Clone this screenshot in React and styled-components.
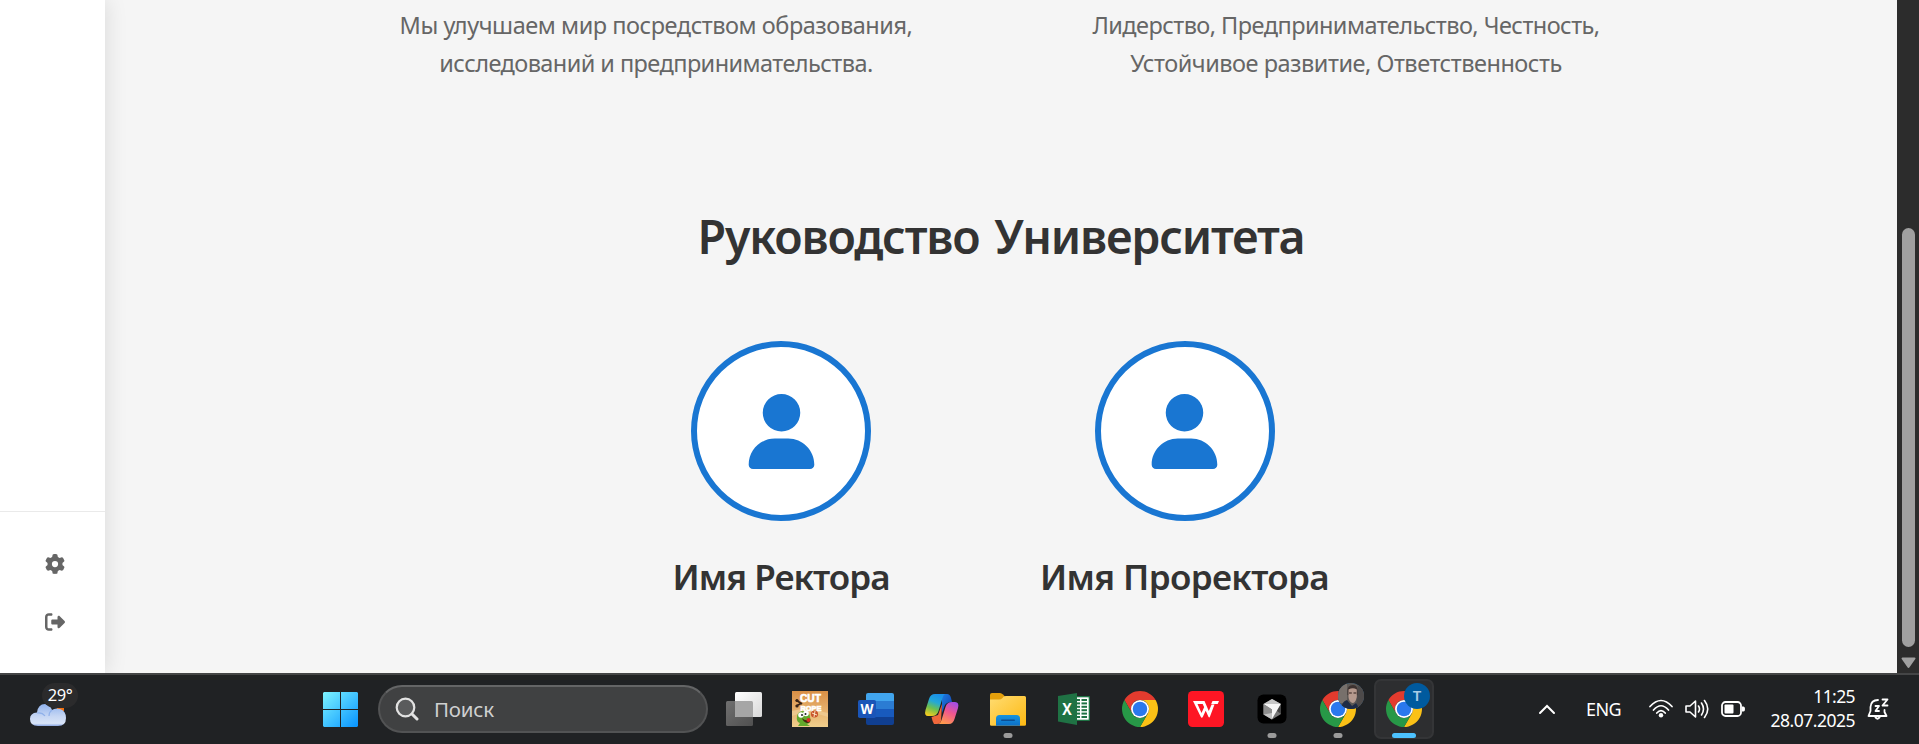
import React from "react";
import styled, { createGlobalStyle } from "styled-components";
import { FaUser, FaGear, FaRightFromBracket } from "react-icons/fa6";

const Global = createGlobalStyle`
  * { box-sizing: border-box; }
  html, body { margin: 0; padding: 0; }
  body { background: #202224; overflow: hidden; font-family: "Noto Sans", "Open Sans", sans-serif; }
  svg { display: block; flex: none; }
`;

const Screen = styled.div`
  width: 1919px;
  height: 744px;
  display: flex;
  flex-direction: column;
  overflow: hidden;
`;

const Viewport = styled.div`
  height: 673px;
  display: flex;
  background: #f5f5f5;
`;

const Sidebar = styled.aside`
  width: 105px;
  display: flex;
  flex-direction: column;
  justify-content: flex-end;
  background: #fff;
  box-shadow: 2px 0 20px rgba(0, 0, 0, 0.1);
`;

const SidebarFooter = styled.div`
  height: 162px;
  padding: 31.5px 0 0 5px;
  border-top: 1px solid #eaeaea;
  display: flex;
  flex-direction: column;
  align-items: center;
  gap: 18.5px;
`;

const SidebarButton = styled.div`
  width: 40px;
  height: 40px;
  display: flex;
  align-items: center;
  justify-content: center;
  color: #666;
  font-size: 20px;
`;

const Content = styled.main`
  flex: 1;
  display: flex;
  flex-direction: column;
  align-items: center;
`;

const Values = styled.div`
  display: grid;
  grid-template-columns: 640px 640px;
  column-gap: 50px;
  padding-top: 6px;
`;

const ValueText = styled.div`
  display: flex;
  flex-direction: column;
  align-items: center;
  color: #666;
  font-size: 23.5px;
  line-height: 38px;
`;

const Line = styled.span`
  white-space: nowrap;
  letter-spacing: ${(p) => p.$ls || 0}px;
`;

const Heading = styled.h2`
  margin: 122px 0 0;
  height: 64px;
  line-height: 64px;
  font-size: 46.5px;
  font-weight: 600;
  word-spacing: 4px;
  color: #333;
`;

const Team = styled.div`
  display: flex;
  gap: 151px;
  margin-top: 73px;
`;

const Member = styled.div`
  width: ${(p) => p.$w}px;
  display: flex;
  flex-direction: column;
  align-items: center;
`;

const Avatar = styled.div`
  width: 180px;
  height: 180px;
  border-radius: 50%;
  border: 6px solid #1976d2;
  background: #fff;
  color: #1976d2;
  font-size: 75px;
  display: flex;
  align-items: center;
  justify-content: center;
`;

const MemberName = styled.h3`
  margin: 31px 0 0;
  line-height: 50px;
  font-size: 35px;
  font-weight: 600;
  color: #333;
`;

const Scrollbar = styled.div`
  width: 22px;
  background: #2c2c2c;
  display: flex;
  flex-direction: column;
  align-items: center;
  padding: 228px 0 0 1px;
`;

const Thumb = styled.div`
  width: 13px;
  height: 419px;
  border-radius: 7px;
  background: #a0a0a0;
  margin-bottom: 10px;
`;

const Taskbar = styled.footer`
  height: 71px;
  border-top: 2px solid #444546;
  background: #202224;
  display: flex;
  align-items: center;
  color: #fff;
`;

const Weather = styled.div`
  width: 293px;
  height: 69px;
  padding: 8px 0 0 29px;
`;

const WeatherArt = styled.div`
  position: relative;
  width: 50px;
  height: 44px;
  display: flex;
  align-items: flex-end;
`;

const Degrees = styled.div`
  position: absolute;
  left: 13px;
  top: 0;
  width: 36px;
  height: 25px;
  border-radius: 13px;
  background: #2b2b2c;
  font-size: 16.5px;
  line-height: 24px;
  text-align: center;
  letter-spacing: -0.5px;
`;

const StartButton = styled.div`
  width: 85px;
  display: flex;
  justify-content: center;
  padding-left: 10px;
`;

const Search = styled.div`
  width: 330px;
  height: 48px;
  margin-top: -1px;
  border-radius: 24px;
  border: 2px solid #525354;
  border-top-color: #646566;
  background: #404142;
  display: flex;
  align-items: center;
  padding-left: 15px;
  gap: 15px;
  color: #cfd0d0;
  font-size: 20.5px;
`;

const Apps = styled.div`
  display: flex;
  padding-left: 3px;
`;

const AppSlot = styled.div`
  width: 66px;
  height: 69px;
  padding: 4px 3px 5px;
`;

const AppButton = styled.div`
  position: relative;
  height: 60px;
  border-radius: 7px;
  display: flex;
  align-items: center;
  justify-content: center;
  background: ${(p) => (p.$active ? "#2d2e30" : "transparent")};
  border: 2px solid ${(p) => (p.$active ? "#343537" : "transparent")};
`;

const Indicator = styled.div`
  position: absolute;
  bottom: -1px;
  left: 50%;
  transform: translateX(-50%);
  width: ${(p) => (p.$active ? 24 : 9)}px;
  height: 5px;
  border-radius: 3px;
  background: ${(p) => (p.$active ? "#4cc2ff" : "#9b9b9b")};
`;

const Badge = styled.div`
  position: absolute;
  right: 2px;
  top: 2px;
  width: 26px;
  height: 26px;
  border-radius: 50%;
  overflow: hidden;
  background: #005a9e;
  color: #a9cbe6;
  font-size: 15px;
  font-weight: 600;
  line-height: 25px;
  text-align: center;
`;

const Tray = styled.div`
  flex: 1;
  display: flex;
  align-items: center;
  padding-left: 101px;
  margin-top: -2px;
`;

const Language = styled.div`
  width: 63px;
  margin-left: 30px;
  font-size: 18px;
  letter-spacing: -0.6px;
`;

const StatusIcons = styled.div`
  display: flex;
  align-items: center;
  gap: 12px;
`;

const Clock = styled.div`
  width: 110px;
  display: flex;
  flex-direction: column;
  align-items: flex-end;
  font-size: 17.5px;
  line-height: 24px;
  margin: -1px 12px 0 0;
`;

const Chrome = () => (
  <svg width="36" height="36" viewBox="0 0 48 48">
    <path fill="#e33b2e" d="M24 12H44.78A24 24 0 0 0 3.22 12L13.6 30A12 12 0 0 1 24 12Z" />
    <path fill="#fbc116" d="M34.4 30L24 48A24 24 0 0 0 44.78 12H24A12 12 0 0 1 34.4 30Z" />
    <path fill="#279847" d="M13.6 30L3.22 12A24 24 0 0 0 24 48L34.4 30A12 12 0 0 1 13.6 30Z" />
    <circle cx="24" cy="24" r="12" fill="#fff" />
    <circle cx="24" cy="24" r="9.7" fill="#2a78ed" />
  </svg>
);

const TaskView = () => (
  <svg width="36" height="36" viewBox="0 0 36 36">
    <defs>
      <linearGradient id="tv1" x1="0" y1="0" x2="1" y2="1"><stop stopColor="#fff" /><stop offset="1" stopColor="#d8d8d8" /></linearGradient>
      <linearGradient id="tv2" x1="0" y1="0" x2="1" y2="1"><stop stopColor="#707070" /><stop offset="1" stopColor="#505050" /></linearGradient>
    </defs>
    <rect x="0" y="10" width="27" height="25" rx="1.5" fill="url(#tv2)" />
    <rect x="9" y="1" width="27" height="25" rx="1.5" fill="url(#tv1)" />
    <path d="M9 10H25.5Q27 10 27 11.5V26H10.5Q9 26 9 24.5Z" fill="#a6a6a6" />
  </svg>
);

const CutRope = () => (
  <svg width="36" height="36" viewBox="0 0 36 36">
    <defs>
      <linearGradient id="cr" x1="0" y1="0" x2="0" y2="1"><stop stopColor="#d98f45" /><stop offset=".5" stopColor="#e5ae6b" /><stop offset="1" stopColor="#f0cf8d" /></linearGradient>
    </defs>
    <rect width="36" height="36" fill="url(#cr)" />
    <path d="M0 20L14 17 36 22V26L16 20 0 25Z" fill="#f0cf98" opacity=".7" />
    <g fontFamily="Liberation Sans" fontWeight="700" fill="#fff" stroke="#fff" strokeWidth=".6">
      <text x="8" y="10.600" fontSize="10.500" textLength="21" lengthAdjust="spacingAndGlyphs">CUT</text>
      <text x="8.500" y="19.500" fontSize="7.200" textLength="21" lengthAdjust="spacingAndGlyphs">ROPE</text>
    </g>
    <path d="M4 9L10 13M4 15L10 12" stroke="#3a2417" strokeWidth="1.8" />
    <circle cx="5" cy="9.5" r="1.6" fill="#3a2417" /><circle cx="5" cy="15" r="1.6" fill="#3a2417" />
    <circle cx="22.5" cy="23" r="3.6" fill="#c9542b" /><path d="M20 22L25 24M23 20L22 26" stroke="#fff0d0" strokeWidth=".9" />
    <path d="M5 25Q6 20 12 20Q18 21 18 26Q20 32 15 33L18 35H6L8 32Q4 31 5 25Z" fill="#63a82c" />
    <path d="M10 27Q14 31 18 28Q19 32 15 32Q11 31 10 27Z" fill="#46270f" /><circle cx="16.5" cy="29" r="2" fill="#e02a25" />
    <circle cx="9" cy="24" r="2.8" fill="#fff" /><circle cx="14" cy="22.5" r="2.8" fill="#fff" />
    <circle cx="10" cy="24" r="1" fill="#222" /><circle cx="13.5" cy="23" r="1" fill="#222" />
  </svg>
);

const Word = () => (
  <svg width="36" height="36" viewBox="0 0 36 36">
    <path d="M10 2H34a2 2 0 0 1 2 2V10H8V4a2 2 0 0 1 2-2Z" fill="#41a5ee" />
    <rect x="8" y="10" width="28" height="8" fill="#2b7cd3" />
    <rect x="8" y="18" width="28" height="8" fill="#185abd" />
    <path d="M8 26H36V32a2 2 0 0 1-2 2H10a2 2 0 0 1-2-2Z" fill="#103f91" />
    <rect x="0" y="9" width="18" height="18" rx="1.8" fill="#1a55b8" />
    <text x="2.500" y="23" fontFamily="Open Sans" fontWeight="700" fontSize="14" fill="#fff" textLength="13" lengthAdjust="spacingAndGlyphs">W</text>
  </svg>
);

const Excel = () => (
  <svg width="36" height="36" viewBox="0 0 36 36">
    <rect x="17" y="5" width="17" height="25" rx="1" fill="#1f7244" />
    <rect x="18" y="6.3" width="14.7" height="22.4" fill="#fff" />
    <g fill="#1f7244">
      {[8, 11.4, 14.8, 18.2, 21.6, 25].map((y) => (
        <React.Fragment key={y}>
          <rect x="18.5" y={y} width="5.5" height="2" />
          <rect x="25.5" y={y} width="5.5" height="2" />
        </React.Fragment>
      ))}
    </g>
    <path d="M2 5L21 2V34L2 30.5Z" fill="#1f7244" />
    <text x="11" y="23.5" fontFamily="Open Sans" fontWeight="700" fontSize="16" fill="#fff" textAnchor="middle" textLength="9.5" lengthAdjust="spacingAndGlyphs">X</text>
  </svg>
);

const Copilot = () => (
  <svg width="36" height="36" viewBox="0 0 36 36">
    <defs>
      <linearGradient id="cp1" x1="0.6" y1="0" x2="0.25" y2="1"><stop stopColor="#1a8fe8" /><stop offset=".35" stopColor="#23a8d8" /><stop offset=".65" stopColor="#6cc04f" /><stop offset="1" stopColor="#f4cb1f" /></linearGradient>
      <linearGradient id="cp2" x1="0.75" y1="0" x2="0.3" y2="1"><stop stopColor="#a34ee6" /><stop offset=".45" stopColor="#f0568f" /><stop offset="1" stopColor="#ff9a4c" /></linearGradient>
      <linearGradient id="cp3" x1="0" y1="0" x2="1" y2="1"><stop stopColor="#1c7be0" /><stop offset="1" stopColor="#123fae" /></linearGradient>
    </defs>
    <path d="M18 3H23Q26 3 27 7L28 11Q22 11 20.5 15L18 22Z" fill="url(#cp3)" />
    <path d="M10 33Q8.500 31 7.500 26L14 24 18 13 17 30Q16 33 13 33Z" fill="#f0683c" />
    <path d="M11 3H21Q19.500 3.500 18.500 7L14.500 20Q13 25 8 25H4Q0 25 1.500 19L5 8Q6.500 3 11 3Z" fill="url(#cp1)" />
    <path d="M25 33H14Q16.500 32.500 17.500 29L21.500 16Q23 11 28 11H31Q35.500 11 34 17L30.500 28Q29 33 25 33Z" fill="url(#cp2)" />
  </svg>
);

const Folder = () => (
  <svg width="36" height="36" viewBox="0 0 36 36">
    <defs>
      <linearGradient id="fo" x1="0" y1="0" x2="1" y2="1"><stop stopColor="#ffdc72" /><stop offset="1" stopColor="#fdb912" /></linearGradient>
      <linearGradient id="fb" x1="0" y1="0" x2="0" y2="1"><stop stopColor="#1594e0" /><stop offset="1" stopColor="#0d6fc7" /></linearGradient>
    </defs>
    <path d="M0 4Q0 2 2 2H10Q11.500 2 13 3.500L15 5.500V12H0Z" fill="#e4a00c" />
    <path d="M0 8.500H9Q11 8.500 12.500 7L13.500 5.800Q14.300 5 16 5H34.500Q36 5 36 6.500V33.500Q36 34.800 34.500 34.800H1.500Q0 34.800 0 33.500Z" fill="url(#fo)" />
    <path d="M6 34.800V27.500Q6 24 9.500 24H26.500Q30 24 30 27.500V34.800Z" fill="url(#fb)" />
    <rect x="11" y="28.500" width="14" height="1.600" rx=".8" fill="#0b4f94" />
  </svg>
);

const Wps = () => (
  <svg width="36" height="36" viewBox="0 0 36 36">
    <rect width="36" height="36" rx="4.500" fill="#fe1624" />
    <path fill="#fff" d="M5 10H16.500L20.800 20 23.600 13.500H26.500L22 25.500Q21.300 27.500 20.300 25.500L14.700 13H9.500L13.500 22 16.200 16 17.800 19.500 15 25.500Q13.800 28 12.600 25.500ZM24.500 10H31L29.700 13H23.200Z" />
  </svg>
);

const CursorApp = () => (
  <svg width="36" height="36" viewBox="0 0 36 36">
    <rect x="3.500" y="3.500" width="29" height="29" rx="6" fill="#000" />
    <path d="M18 8L27 13V23L18 28.500 9.500 23.500V13Z" fill="#777" />
    <path d="M18 8L27 13 18 15.500 9.500 13Z" fill="#c6c6c6" />
    <path d="M9.500 13L26.800 13 18 28 18 18.500Z" fill="#f6f6f6" />
    <path d="M9.500 13L18 18.500V23L9.500 23.500Z" fill="#8e8e8e" />
    <path d="M27 13L23 20 27 23Z" fill="#444" />
    <path d="M9.500 23.500L18 22V28.500Z" fill="#c4c4c4" />
  </svg>
);

const Photo = () => (
  <svg width="26" height="26" viewBox="0 0 26 26">
    <rect width="26" height="26" fill="#5c5855" />
    <path d="M0 0H9V20H0Z" fill="#77706b" /><path d="M20 0H26V26H18Z" fill="#4d4a4a" />
    <path d="M9.500 9Q9 2 15 2Q20 2 19.500 9V12H9.500Z" fill="#3d3230" />
    <path d="M10.500 6.500Q15 4 18.800 6.500V14Q17.500 20 14.500 20Q11 19 10.500 14Z" fill="#b69a8e" />
    <path d="M11 10H13.800M15.500 10H18.300" stroke="#5c4842" strokeWidth="1.400" />
    <path d="M3 26Q4 18 9 17L14 23 18 20Q20 22 20 26Z" fill="#1e2b45" />
  </svg>
);

const APPS = [
  { id: "tasks", icon: <TaskView /> },
  { id: "rope", icon: <CutRope /> },
  { id: "word", icon: <Word /> },
  { id: "copilot", icon: <Copilot /> },
  { id: "files", icon: <Folder />, open: true },
  { id: "excel", icon: <Excel /> },
  { id: "chrome", icon: <Chrome /> },
  { id: "wps", icon: <Wps /> },
  { id: "cursor", icon: <CursorApp />, open: true },
  { id: "chrome-1", icon: <Chrome />, open: true, badge: <Photo /> },
  { id: "chrome-2", icon: <Chrome />, open: true, active: true, badge: "T" },
];

export default function App() {
  return (
    <Screen>
      <Global />
      <Viewport>
        <Sidebar>
          <SidebarFooter>
            <SidebarButton><FaGear /></SidebarButton>
            <SidebarButton><FaRightFromBracket /></SidebarButton>
          </SidebarFooter>
        </Sidebar>
        <Content>
          <Values>
            <ValueText>
              <Line $ls={-0.45}>Мы улучшаем мир посредством образования,</Line>
              <Line $ls={-0.56}>исследований и предпринимательства.</Line>
            </ValueText>
            <ValueText>
              <Line $ls={-0.54}>Лидерство, Предпринимательство, Честность,</Line>
              <Line $ls={-0.47}>Устойчивое развитие, Ответственность</Line>
            </ValueText>
          </Values>
          <Heading><Line $ls={-1.2}>Руководство Университета</Line></Heading>
          <Team>
            <Member $w={216}>
              <Avatar><FaUser /></Avatar>
              <MemberName><Line $ls={-0.95}>Имя Ректора</Line></MemberName>
            </Member>
            <Member $w={289}>
              <Avatar><FaUser /></Avatar>
              <MemberName><Line $ls={-0.62}>Имя Проректора</Line></MemberName>
            </Member>
          </Team>
        </Content>
        <Scrollbar>
          <Thumb />
          <svg width="15" height="12" viewBox="0 0 15 12">
            <path d="M1.500 1.500H13.500L7.500 10Z" fill="#a0a0a0" stroke="#a0a0a0" strokeWidth="2" strokeLinejoin="round" />
          </svg>
        </Scrollbar>
      </Viewport>
      <Taskbar>
        <Weather>
          <WeatherArt>
            <svg width="38" height="26" viewBox="0 0 38 26">
              <defs>
                <linearGradient id="cl" x1="0" y1="0" x2="0" y2="1"><stop stopColor="#8fb2ee" /><stop offset=".55" stopColor="#c6d6f3" /><stop offset=".88" stopColor="#d8e4f8" /><stop offset="1" stopColor="#8aa6e2" /></linearGradient>
              </defs>
              <rect x="28" y="4" width="7" height="6" fill="#f2700f" />
              <path d="M9 25Q1 25 1 18Q1 12 8 11.500Q9 3 16 3Q21 3 23 9Q26 6.500 31 8Q37 10 37 17Q37 25 29 25Z" fill="url(#cl)" />
              <path d="M8 12Q13 11 16 15M23 9Q20 11 20 15" fill="none" stroke="#8fb0ea" strokeWidth="1.200" />
            </svg>
            <Degrees>29°</Degrees>
          </WeatherArt>
        </Weather>
        <StartButton>
          <svg width="35" height="35" viewBox="0 0 35 35">
            <defs>
              <linearGradient id="win" gradientUnits="userSpaceOnUse" x1="0" y1="0" x2="35" y2="35"><stop stopColor="#7df4ff" /><stop offset="1" stopColor="#0793ff" /></linearGradient>
            </defs>
            <path d="M1 0H17V17H0V1ZM18 0H34L35 1V17H18ZM0 18H17V35H1L0 34ZM18 18H35V34L34 35H18Z" fill="url(#win)" />
          </svg>
        </StartButton>
        <Search>
          <svg width="24" height="24" viewBox="0 0 24 24" fill="none" stroke="#e2e2e2" strokeWidth="2.200">
            <circle cx="10.500" cy="10.500" r="8.800" fill="#5a5b5c" />
            <path d="M17 17L22 22" strokeWidth="3" strokeLinecap="round" />
          </svg>
          <Line $ls={-0.2}>Поиск</Line>
        </Search>
        <Apps>
          {APPS.map((a) => (
            <AppSlot key={a.id}>
              <AppButton $active={a.active}>
                {a.icon}
                {a.badge && <Badge>{a.badge}</Badge>}
                {a.open && <Indicator $active={a.active} />}
              </AppButton>
            </AppSlot>
          ))}
        </Apps>
        <Tray>
          <svg width="18" height="12" viewBox="0 0 18 12"><path d="M2 10L9 3 16 10" fill="none" stroke="#fff" strokeWidth="2" strokeLinecap="round" /></svg>
          <Language>ENG</Language>
          <StatusIcons>
            <svg width="24" height="20" viewBox="0 0 24 20" fill="none" stroke="#fff" strokeWidth="1.700" strokeLinecap="round">
              <path d="M1 7.500Q12-4.500 23 7.500M4.500 11Q12 2.500 19.500 11M7.800 14Q12 9.300 16.200 14" />
              <circle cx="12" cy="16.300" r="2.200" fill="#fff" stroke="none" />
            </svg>
            <svg width="24" height="20" viewBox="0 0 24 20" fill="none" stroke="#fff" strokeWidth="1.600" strokeLinecap="round" strokeLinejoin="round">
              <path d="M1 7V13H5L10.500 18V2L5 7ZM13.500 7Q15.500 10 13.500 13M16.500 4Q20.500 10 16.500 16M19.500 1.500Q26 10 19.500 18.500" />
            </svg>
            <svg width="24" height="16" viewBox="0 0 24 16" fill="none" stroke="#fff" strokeWidth="1.800">
              <rect x="1" y="1" width="19" height="14" rx="3.500" />
              <rect x="3.500" y="3.500" width="9" height="9" rx="1" fill="#fff" stroke="none" />
              <path d="M21 5.500H22.500Q24 5.500 24 8T22.500 10.500H21Z" fill="#fff" stroke="none" />
            </svg>
          </StatusIcons>
          <Clock>
            <Line $ls={-0.6}>11:25</Line>
            <Line $ls={-0.5}>28.07.2025</Line>
          </Clock>
          <svg width="22" height="22" viewBox="0 0 22 22" fill="none" stroke="#fff" strokeWidth="1.800" strokeLinejoin="round" strokeLinecap="round">
            <path d="M11 2Q4 2 3.500 9V13L1.500 18H19.500L17.500 14V12M8 18.500Q10.500 23 13 18.500M8.500 8H12L8.500 13H12M15.500 1.500H20.500L15.500 7.500H20.500" />
          </svg>
        </Tray>
      </Taskbar>
    </Screen>
  );
}
